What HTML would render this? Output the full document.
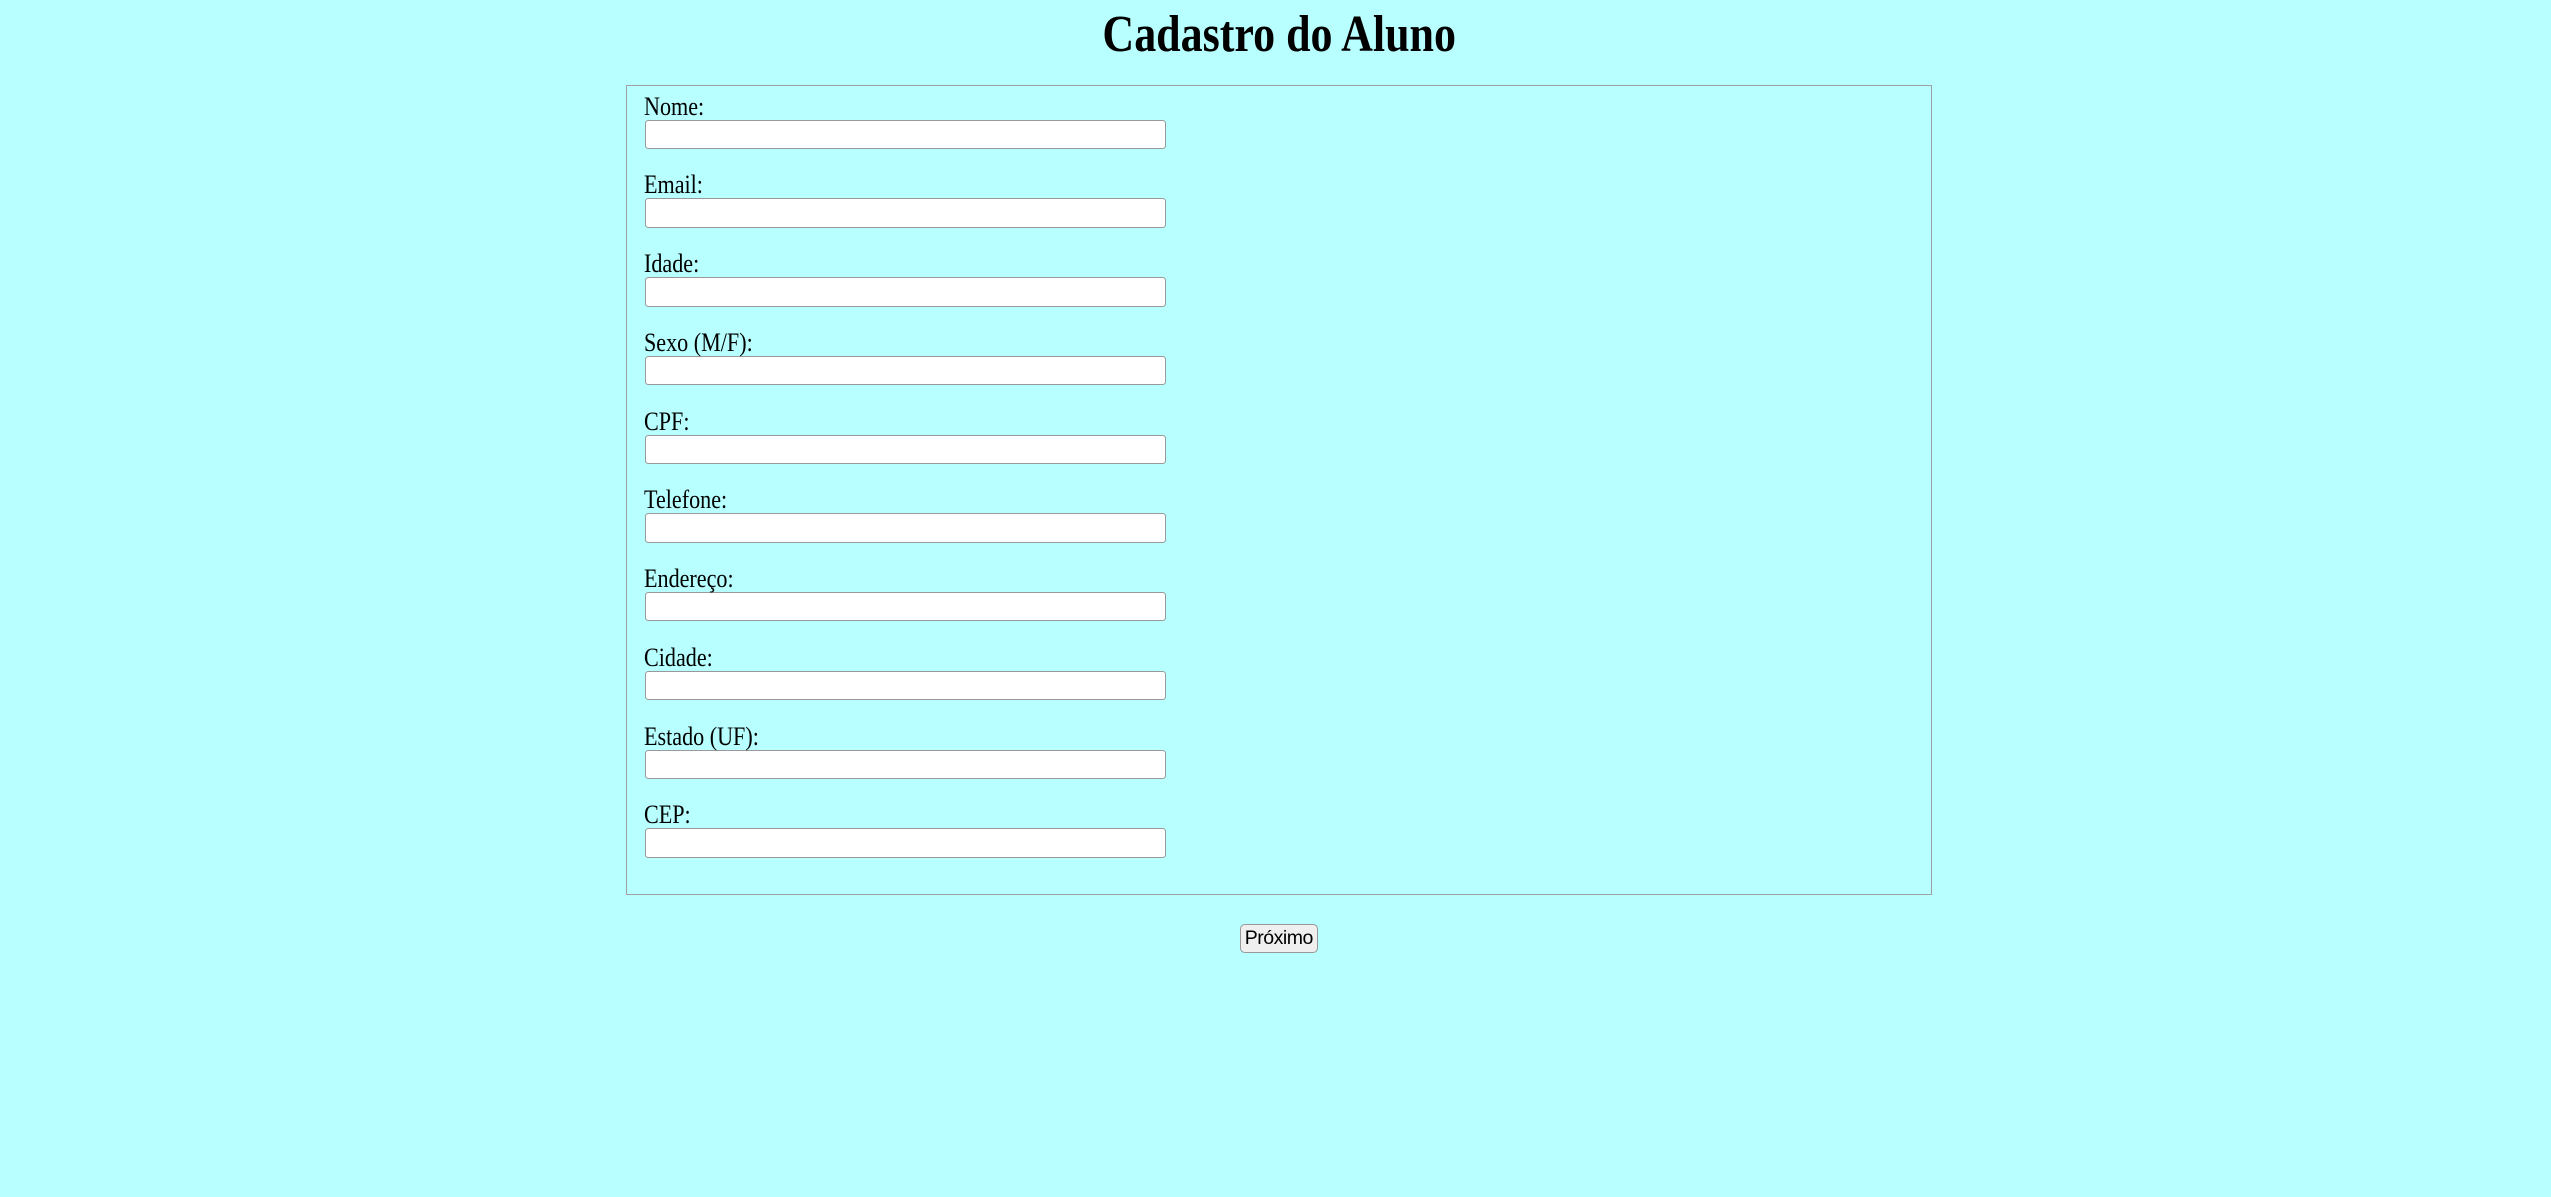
<!DOCTYPE html>
<html><head><meta charset="utf-8"><style>
html{zoom:1.627;}
body{margin:0;background:#b8ffff;font-family:"Liberation Serif",serif;font-size:16px;width:1568px;height:733px;overflow:hidden;}
h1{text-align:center;font-size:32px;margin:3px 0 12px;line-height:37px;padding-left:5px;}
h1 span{display:inline-block;transform:scaleX(0.845);}
fieldset{width:781px;margin:0 0 0 385px;border:1px solid #a0a0a0;padding:5px 10px 8px 10px;}
label{display:block;line-height:16px;height:16px;}
label span{display:inline-block;transform:scaleX(0.85);transform-origin:left;}
input{display:block;width:320px;height:18px;box-sizing:border-box;border:1px solid #999;border-radius:2px;background:#fff;margin:0 0 14.4px 1px;padding:0;}
.b{text-align:center;margin-top:16px;padding-left:4px;}
button{font-family:"Liberation Sans",sans-serif;font-size:12px;height:18px;padding:0 2.5px;border:1px solid #999;border-radius:3px;background:#efefef;letter-spacing:-0.3px;}
</style></head><body>
<h1><span>Cadastro do Aluno</span></h1>
<fieldset>
<label><span>Nome:</span></label><input>
<label><span>Email:</span></label><input>
<label><span>Idade:</span></label><input>
<label><span>Sexo (M/F):</span></label><input>
<label><span>CPF:</span></label><input>
<label><span>Telefone:</span></label><input>
<label><span>Endereço:</span></label><input>
<label><span>Cidade:</span></label><input>
<label><span>Estado (UF):</span></label><input>
<label><span>CEP:</span></label><input>
</fieldset>
<div class="b"><button>Próximo</button></div>
</body></html>
